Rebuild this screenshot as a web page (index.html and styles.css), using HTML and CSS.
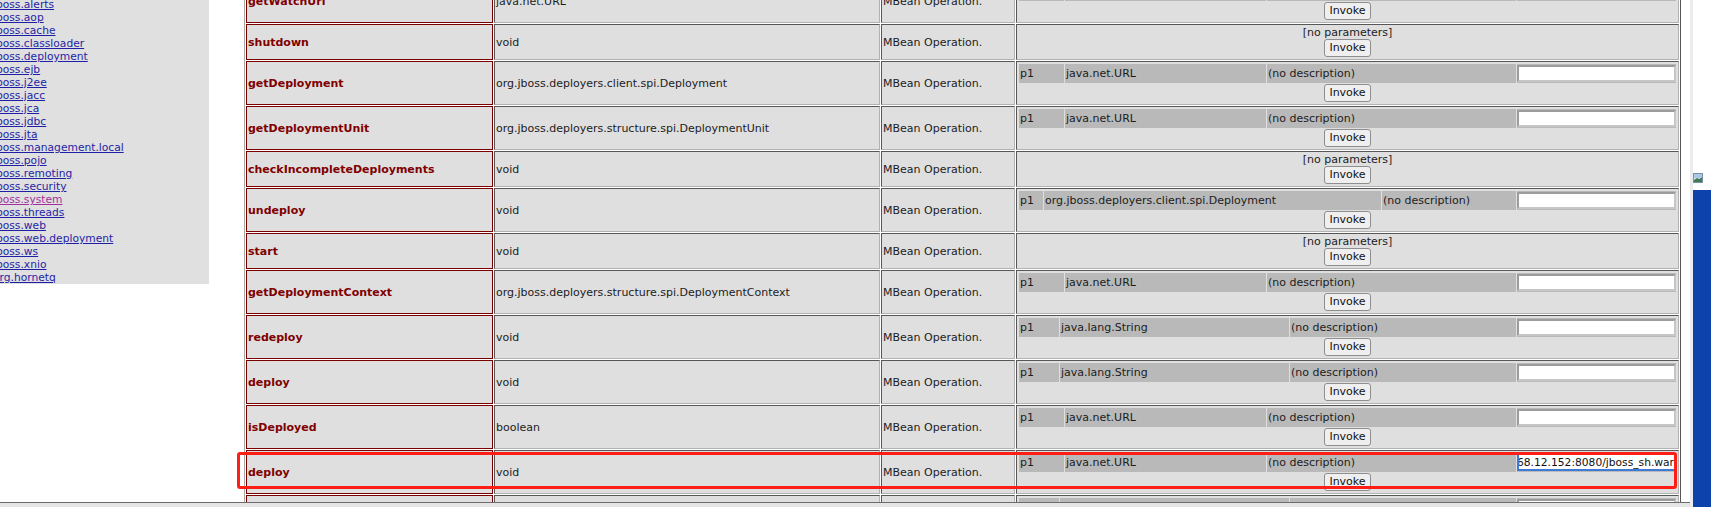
FILE: index.html
```html
<!DOCTYPE html>
<html>
<head>
<meta charset="utf-8">
<title>JMX Agent View</title>
<link rel="stylesheet" href="styles.css">
</head>
<body>
<div class="screen">
  <div class="browser">
    <div class="viewport">
      <aside class="sidebar">
        <ul class="domains">
          <li><a href="#">jboss.alerts</a></li>
          <li><a href="#">jboss.aop</a></li>
          <li><a href="#">jboss.cache</a></li>
          <li><a href="#">jboss.classloader</a></li>
          <li><a href="#">jboss.deployment</a></li>
          <li><a href="#">jboss.ejb</a></li>
          <li><a href="#">jboss.j2ee</a></li>
          <li><a href="#">jboss.jacc</a></li>
          <li><a href="#">jboss.jca</a></li>
          <li><a href="#">jboss.jdbc</a></li>
          <li><a href="#">jboss.jta</a></li>
          <li><a href="#">jboss.management.local</a></li>
          <li><a href="#">jboss.pojo</a></li>
          <li><a href="#">jboss.remoting</a></li>
          <li><a href="#">jboss.security</a></li>
          <li><a href="#" class="visited">jboss.system</a></li>
          <li><a href="#">jboss.threads</a></li>
          <li><a href="#">jboss.web</a></li>
          <li><a href="#">jboss.web.deployment</a></li>
          <li><a href="#">jboss.ws</a></li>
          <li><a href="#">jboss.xnio</a></li>
          <li><a href="#">org.hornetq</a></li>
        </ul>
      </aside>

      <main class="ops">
        <table class="optable">
          <tr>
            <td class="cell name">getWatchUrl</td>
            <td class="cell type">java.net.URL</td>
            <td class="cell desc">MBean Operation.</td>
            <td class="cell params">
              <table class="ptab url"><tr><td class="pn">p1</td><td class="pt">java.net.URL</td><td class="pd">(no description)</td><td class="pv"><input class="field" type="text"></td></tr></table>
              <button class="invoke">Invoke</button>
            </td>
          </tr>
          <tr>
            <td class="cell name">shutdown</td>
            <td class="cell type">void</td>
            <td class="cell desc">MBean Operation.</td>
            <td class="cell params">
              <div class="noparams">[no parameters]</div>
              <button class="invoke">Invoke</button>
            </td>
          </tr>
          <tr>
            <td class="cell name">getDeployment</td>
            <td class="cell type">org.jboss.deployers.client.spi.Deployment</td>
            <td class="cell desc">MBean Operation.</td>
            <td class="cell params">
              <table class="ptab url"><tr><td class="pn">p1</td><td class="pt">java.net.URL</td><td class="pd">(no description)</td><td class="pv"><input class="field" type="text"></td></tr></table>
              <button class="invoke">Invoke</button>
            </td>
          </tr>
          <tr>
            <td class="cell name">getDeploymentUnit</td>
            <td class="cell type">org.jboss.deployers.structure.spi.DeploymentUnit</td>
            <td class="cell desc">MBean Operation.</td>
            <td class="cell params">
              <table class="ptab url"><tr><td class="pn">p1</td><td class="pt">java.net.URL</td><td class="pd">(no description)</td><td class="pv"><input class="field" type="text"></td></tr></table>
              <button class="invoke">Invoke</button>
            </td>
          </tr>
          <tr>
            <td class="cell name">checkIncompleteDeployments</td>
            <td class="cell type">void</td>
            <td class="cell desc">MBean Operation.</td>
            <td class="cell params">
              <div class="noparams">[no parameters]</div>
              <button class="invoke">Invoke</button>
            </td>
          </tr>
          <tr>
            <td class="cell name">undeploy</td>
            <td class="cell type">void</td>
            <td class="cell desc">MBean Operation.</td>
            <td class="cell params">
              <table class="ptab dep"><tr><td class="pn">p1</td><td class="pt">org.jboss.deployers.client.spi.Deployment</td><td class="pd">(no description)</td><td class="pv"><input class="field" type="text"></td></tr></table>
              <button class="invoke">Invoke</button>
            </td>
          </tr>
          <tr>
            <td class="cell name">start</td>
            <td class="cell type">void</td>
            <td class="cell desc">MBean Operation.</td>
            <td class="cell params">
              <div class="noparams">[no parameters]</div>
              <button class="invoke">Invoke</button>
            </td>
          </tr>
          <tr>
            <td class="cell name">getDeploymentContext</td>
            <td class="cell type">org.jboss.deployers.structure.spi.DeploymentContext</td>
            <td class="cell desc">MBean Operation.</td>
            <td class="cell params">
              <table class="ptab url"><tr><td class="pn">p1</td><td class="pt">java.net.URL</td><td class="pd">(no description)</td><td class="pv"><input class="field" type="text"></td></tr></table>
              <button class="invoke">Invoke</button>
            </td>
          </tr>
          <tr>
            <td class="cell name">redeploy</td>
            <td class="cell type">void</td>
            <td class="cell desc">MBean Operation.</td>
            <td class="cell params">
              <table class="ptab str"><tr><td class="pn">p1</td><td class="pt">java.lang.String</td><td class="pd">(no description)</td><td class="pv"><input class="field" type="text"></td></tr></table>
              <button class="invoke">Invoke</button>
            </td>
          </tr>
          <tr>
            <td class="cell name">deploy</td>
            <td class="cell type">void</td>
            <td class="cell desc">MBean Operation.</td>
            <td class="cell params">
              <table class="ptab str"><tr><td class="pn">p1</td><td class="pt">java.lang.String</td><td class="pd">(no description)</td><td class="pv"><input class="field" type="text"></td></tr></table>
              <button class="invoke">Invoke</button>
            </td>
          </tr>
          <tr>
            <td class="cell name">isDeployed</td>
            <td class="cell type">boolean</td>
            <td class="cell desc">MBean Operation.</td>
            <td class="cell params">
              <table class="ptab url"><tr><td class="pn">p1</td><td class="pt">java.net.URL</td><td class="pd">(no description)</td><td class="pv"><input class="field" type="text"></td></tr></table>
              <button class="invoke">Invoke</button>
            </td>
          </tr>
          <tr>
            <td class="cell name">deploy</td>
            <td class="cell type">void</td>
            <td class="cell desc">MBean Operation.</td>
            <td class="cell params">
              <table class="ptab url"><tr><td class="pn">p1</td><td class="pt">java.net.URL</td><td class="pd">(no description)</td><td class="pv"><input class="field focus" type="text" value="http://192.168.12.152:8080/jboss_sh.war"></td></tr></table>
              <button class="invoke">Invoke</button>
            </td>
          </tr>
          <tr>
            <td class="cell name">undeploy</td>
            <td class="cell type">void</td>
            <td class="cell desc">MBean Operation.</td>
            <td class="cell params">
              <table class="ptab str"><tr><td class="pn">p1</td><td class="pt">java.lang.String</td><td class="pd">(no description)</td><td class="pv"><input class="field" type="text"></td></tr></table>
              <button class="invoke">Invoke</button>
            </td>
          </tr>
        </table>
      </main>

      <div class="highlight"></div>
    </div>
    <div class="hscroll"></div>
  </div>
  <div class="edge"></div>
  <div class="desktop">
    <div class="desk-top">
      <svg class="thumb" width="10" height="10" viewBox="0 0 10 10">
        <rect x="0.5" y="0.5" width="9" height="9" fill="#dfe9f3" stroke="#7d8fa3"/>
        <rect x="1" y="1" width="8" height="4" fill="#a9c8e8"/>
        <path d="M1 7 L4 5 L6 6 L9 4.5 L9 9 L1 9 Z" fill="#3d7a55"/>
      </svg>
    </div>
    <div class="desk-blue"></div>
  </div>
</div>
</body>
</html>
```

FILE: styles.css
```css
html, body {
  margin: 0;
  padding: 0;
  height: 100%;
  overflow: hidden;
  background: #ffffff;
}

body {
  font-family: "DejaVu Sans", "Liberation Sans", sans-serif;
  font-size: 11px;
  color: #1c1c1c;
}

.screen {
  display: flex;
  width: 1711px;
  height: 507px;
}

.browser {
  width: 1690px;
  flex: none;
  display: flex;
  flex-direction: column;
}

.viewport {
  position: relative;
  height: 502px;
  flex: none;
  overflow: hidden;
  display: flex;
  align-items: flex-start;
}

/* ---------- left domain list ---------- */
.sidebar {
  width: 209px;
  flex: none;
  background: #e0e0e0;
  margin-top: -2px;
  padding-bottom: 0;
  overflow: hidden;
}

.domains {
  list-style: none;
  margin: 0 0 0 -7px;
  padding: 0;
  font-size: 10.7px;
  line-height: 13px;
  white-space: nowrap;
}

.domains a {
  color: #1f1fa6;
  text-decoration: underline;
}

.domains a.visited {
  color: #a0309e;
}

/* ---------- operations table ---------- */
.ops {
  flex: none;
  margin-left: 35px;
  margin-top: -23px;
}

.optable {
  width: 1437px;
  table-layout: fixed;
  border-spacing: 1px;
  border-style: solid;
  border-width: 1px;
  border-color: #a8a8a8 #555555 #555555 #a8a8a8;
}

.cell {
  box-sizing: border-box;
  background: #dfdfdf;
  border-style: solid;
  border-width: 1px;
  border-color: #575757 #b2b2b2 #b2b2b2 #575757;
  padding: 1px;
  vertical-align: middle;
  line-height: 13px;
  white-space: nowrap;
  overflow: hidden;
}

.name {
  width: 247px;
  border-color: #7a0000;
  color: #800000;
  font-weight: bold;
}

.type {
  width: 386px;
}

.desc {
  width: 134px;
}

.params {
  width: 663px;
  text-align: center;
}

.noparams {
  line-height: 13px;
}

/* ---------- parameter sub-table ---------- */
.ptab {
  width: 100%;
  table-layout: fixed;
  border-spacing: 1px;
  border: 0;
}

.ptab td {
  box-sizing: border-box;
  background: #b9b9b9;
  padding: 1px;
  height: 19px;
  text-align: left;
  vertical-align: middle;
  line-height: 13px;
  white-space: nowrap;
  overflow: hidden;
}

.ptab .pv {
  width: 159px;
  padding: 1px 0;
}

.url .pn { width: 45px; }
.url .pt { width: 201px; }
.url .pd { width: 249px; }

.dep .pn { width: 24px; }
.dep .pt { width: 337px; }
.dep .pd { width: 134px; }

.str .pn { width: 40px; }
.str .pt { width: 229px; }
.str .pd { width: 226px; }

.field {
  display: block;
  box-sizing: border-box;
  width: 100%;
  height: 17px;
  margin: 0;
  padding: 0 2px;
  border-style: solid;
  border-width: 2px;
  border-color: #9c9c9c #c6c6c6 #c6c6c6 #9c9c9c;
  background: #ffffff;
  font-family: "DejaVu Sans", "Liberation Sans", sans-serif;
  font-size: 11px;
  color: #111111;
  outline: none;
}

.field.focus {
  border-color: #3f7bd6;
  border-width: 1px 1px 2px 2px;
  padding: 0 1px 0 0;
  font-size: 10.7px;
  direction: rtl;
}

.invoke {
  display: block;
  box-sizing: border-box;
  height: 18px;
  margin: 0 auto 1px;
  padding: 0 4px;
  border: 1px solid #8e8e8e;
  border-radius: 3px;
  background: #efefef;
  font-family: "DejaVu Sans", "Liberation Sans", sans-serif;
  font-size: 11px;
  line-height: 14px;
  color: #111111;
}

/* ---------- annotation ---------- */
.highlight {
  position: absolute;
  left: 237px;
  top: 452px;
  width: 1440px;
  height: 37px;
  box-sizing: border-box;
  border: 3px solid #ff1e16;
  border-radius: 3px;
  pointer-events: none;
}

/* ---------- window chrome ---------- */
.hscroll {
  height: 5px;
  flex: none;
  box-sizing: border-box;
  border-top: 1px solid #6c6c6c;
  background: #e5e5e5;
}

.edge {
  width: 3px;
  flex: none;
  background: #ececec;
}

.desktop {
  width: 18px;
  flex: none;
  display: flex;
  flex-direction: column;
}

.desk-top {
  height: 190px;
  box-sizing: border-box;
  padding-top: 173px;
  background: #ffffff;
}

.thumb {
  display: block;
}

.desk-blue {
  flex: 1;
  background: #0d41ab;
}
```
